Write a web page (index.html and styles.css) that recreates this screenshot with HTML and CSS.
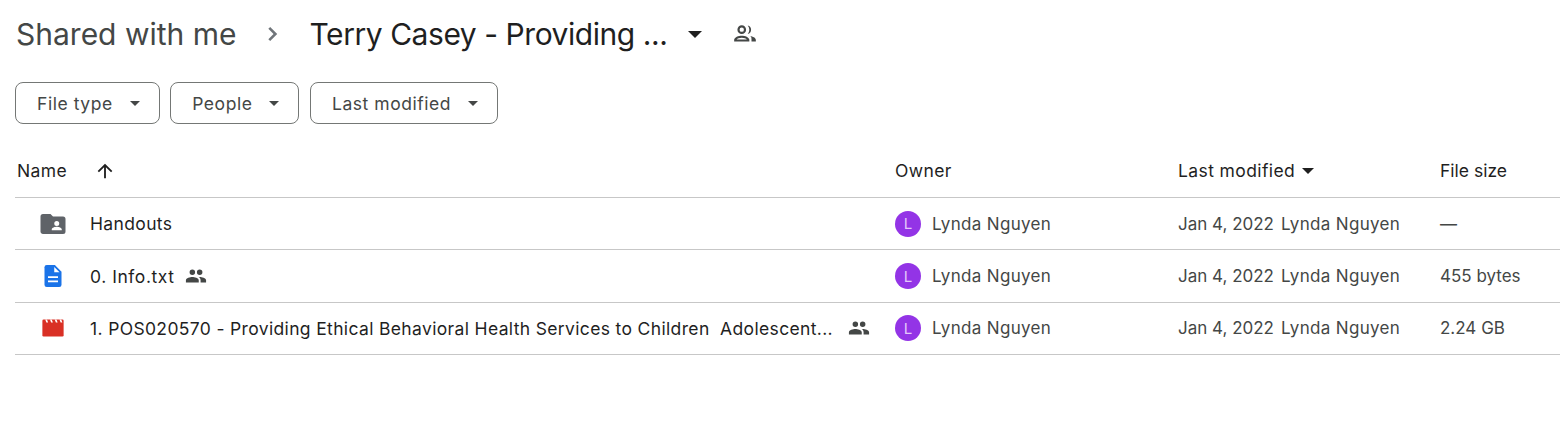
FILE: index.html
```html
<!DOCTYPE html>
<html lang="en">
<head>
  <meta charset="UTF-8">
  <title>Terry Casey - Providing ... - Google Drive</title>
  <link rel="stylesheet" href="styles.css">
</head>
<body>

  <div class="crumbs">
    <span class="crumb-parent">Shared with me</span>
    <svg class="crumb-sep" viewBox="0 0 24 24" width="26" height="26"><path d="M9.400 5.500 7.700 7.200 12.500 12l-4.800 4.800 1.700 1.700 6.500-6.500z"/></svg>
    <span class="crumb-current">Terry Casey - Providing ...</span>
    <span class="caret caret-big"></span>
    <svg class="crumb-people" viewBox="0 0 24 24" width="26" height="26"><path d="M9 12a4 4 0 1 0 0-8 4 4 0 0 0 0 8zm0-6a2 2 0 1 1 0 4 2 2 0 0 1 0-4zm0 7.500c-2.900 0-7 1.400-7 3.900V19h14v-1.600c0-2.500-4.100-3.900-7-3.900zM4.300 17c.6-.8 2.600-1.500 4.700-1.500s4.100.7 4.700 1.500H4.300zM14.500 11.900a4 4 0 0 0 0-7.800 5.900 5.900 0 0 1 0 7.800zm2.200 1.900c1.500.9 1.300 2.500 1.300 3.600V19h4v-1.600c0-1.900-2.800-3.200-5.300-3.600z"/></svg>
  </div>

  <div class="filters">
    <button class="filter">File type <span class="caret"></span></button>
    <button class="filter">People <span class="caret"></span></button>
    <button class="filter">Last modified <span class="caret"></span></button>
  </div>

  <div class="file-list">
    <div class="row head">
      <div class="cell name-head">Name
        <svg class="sort-arrow" viewBox="0 0 24 24" width="22" height="22"><path d="M4 12l1.400 1.400L11 7.800V20h2V7.800l5.600 5.600L20 12l-8-8z"/></svg>
      </div>
      <div class="cell">Owner</div>
      <div class="cell">Last modified <span class="caret caret-sort"></span></div>
      <div class="cell head-size">File size</div>
    </div>

    <div class="row">
      <div class="cell name">
        <svg class="file-icon" viewBox="0 0 24 24" width="30" height="30"><path fill="#5f6368" d="M10 4H4a2 2 0 0 0-2 2v12c0 1.100.9 2 2 2h16a2 2 0 0 0 2-2V8a2 2 0 0 0-2-2h-8z"/><path fill="#fff" d="M15 9.500a2 2 0 1 1 0 4 2 2 0 0 1 0-4zM11 17v-.8c0-1.300 2.700-2 4-2s4 .7 4 2v.8z"/></svg>
        <span class="file-name">Handouts</span>
      </div>
      <div class="cell owner"><span class="avatar">L</span>Lynda Nguyen</div>
      <div class="cell modified"><span>Jan 4, 2022</span><span class="by">Lynda Nguyen</span></div>
      <div class="cell size">—</div>
    </div>

    <div class="row">
      <div class="cell name">
        <svg class="file-icon" viewBox="0 0 24 24" width="30" height="30"><path fill="#1a73e8" d="M13.500 3.200H7A1.800 1.800 0 0 0 5.200 5v14A1.800 1.800 0 0 0 7 20.800h10a1.800 1.800 0 0 0 1.800-1.800V8.500z"/><path fill="#fff" d="M13 4.800 17.200 9H13zM8 12.200h8v1.400H8zM8 15.600h8V17H8z"/></svg>
        <span class="file-name short">0. Info.txt</span>
        <svg class="shared" viewBox="0 0 24 24" width="24" height="24"><path d="M16 11a3 3 0 1 0 0-6 3 3 0 0 0 0 6zm-8 0a3 3 0 1 0 0-6 3 3 0 0 0 0 6zm0 2c-2.300 0-7 1.200-7 3.500V19h14v-2.500C15 14.200 10.300 13 8 13zm8 0c-.3 0-.6 0-1 .1 1.200.8 2 2 2 3.400V19h6v-2.500c0-2.300-4.700-3.500-7-3.500z"/></svg>
      </div>
      <div class="cell owner"><span class="avatar">L</span>Lynda Nguyen</div>
      <div class="cell modified"><span>Jan 4, 2022</span><span class="by">Lynda Nguyen</span></div>
      <div class="cell size">455 bytes</div>
    </div>

    <div class="row">
      <div class="cell name">
        <svg class="file-icon" viewBox="0 0 24 24" width="30" height="30"><path fill="#d93025" d="M4.500 5.200h15a1 1 0 0 1 1 1v11.600a1 1 0 0 1-1 1h-15a1 1 0 0 1-1-1V6.200a1 1 0 0 1 1-1z"/><path fill="#fff" d="M5.800 5.200h1.400l.9 2.300H6.700zM9.600 5.200H11l.9 2.300h-1.400zM13.400 5.200h1.400l.9 2.300h-1.400zM17.200 5.200h1.400l.9 2.300h-1.400z"/></svg>
        <span class="file-name long">1. POS020570 - Providing Ethical Behavioral Health Services to Children&nbsp; Adolescent...</span>
        <svg class="shared" viewBox="0 0 24 24" width="24" height="24"><path d="M16 11a3 3 0 1 0 0-6 3 3 0 0 0 0 6zm-8 0a3 3 0 1 0 0-6 3 3 0 0 0 0 6zm0 2c-2.300 0-7 1.200-7 3.500V19h14v-2.500C15 14.200 10.300 13 8 13zm8 0c-.3 0-.6 0-1 .1 1.200.8 2 2 2 3.400V19h6v-2.500c0-2.300-4.700-3.500-7-3.500z"/></svg>
      </div>
      <div class="cell owner"><span class="avatar">L</span>Lynda Nguyen</div>
      <div class="cell modified"><span>Jan 4, 2022</span><span class="by">Lynda Nguyen</span></div>
      <div class="cell size">2.24 GB</div>
    </div>
  </div>

</body>
</html>
```

FILE: styles.css
```css
body {
  margin: 0;
  padding-left: 15px;
  background-color: #fff;
  color: #1f1f1f;
  font-family: Inter, Roboto, sans-serif;
  font-size: 17px;
  overflow: hidden;
}
.crumbs {
  display: flex;
  align-items: center;
  height: 68px;
  padding-bottom: 2px;
}
.crumb-parent {
  font-size: 30px;
  color: #444746;
  margin-left: 1px;
}
.crumb-sep {
  fill: #70757a;
  margin: 0 24px 0 23px;
}
.crumb-current {
  width: 357px;
  font-size: 30px;
  letter-spacing: -0.45px;
  color: #1f1f1f;
  white-space: nowrap;
}
.crumb-people {
  fill: #444746;
  margin-left: 30px;
}
.caret {
  display: inline-block;
  border-left: 5px solid transparent;
  border-right: 5px solid transparent;
  border-top: 5px solid #444746;
}
.caret-big {
  border-left-width: 7px;
  border-right-width: 7px;
  border-top-width: 7px;
  border-top-color: #1f1f1f;
  margin-left: 21px;
}
.caret-sort {
  border-left-width: 6px;
  border-right-width: 6px;
  border-top-width: 6px;
  border-top-color: #1f1f1f;
  margin-left: 7px;
}
.filters {
  display: flex;
  gap: 10.500px;
  margin-top: 12px;
}
.filter {
  display: flex;
  align-items: center;
  gap: 17px;
  height: 42px;
  padding: 0 19px 0 21px;
  background: #fff;
  border: 1px solid #747775;
  border-radius: 8px;
  color: #444746;
  font-family: inherit;
  font-size: 17.500px;
  letter-spacing: 0.55px;
}
.file-list {
  margin-top: 25px;
}
.row {
  display: grid;
  grid-template-columns: 880px 283px 262px 1fr;
  align-items: center;
  height: 51.400px;
  border-bottom: 1px solid #c7c7c7;
  color: #444746;
}
.head {
  height: 49px;
  padding-bottom: 5px;
  box-sizing: border-box;
  color: #1f1f1f;
  font-size: 17.500px;
  letter-spacing: 0.4px;
}
.head-size {
  letter-spacing: 0;
}
.cell {
  display: flex;
  align-items: center;
  min-width: 0;
  white-space: nowrap;
}
.name-head {
  padding-left: 2px;
}
.sort-arrow {
  fill: #1f1f1f;
  margin-left: 27px;
}
.name {
  color: #1f1f1f;
  padding-left: 23px;
  font-size: 17.500px;
  letter-spacing: 0.35px;
}
.file-icon {
  flex: none;
}
.file-name {
  margin-left: 22px;
}
.short {
  letter-spacing: 0.55px;
}
.long {
  width: 742px;
}
.shared {
  flex: none;
  fill: #444746;
  width: 22px;
  height: 22px;
  margin-left: 10px;
}
.long + .shared {
  margin-left: 16px;
}
.owner {
  gap: 11px;
  letter-spacing: 0.33px;
}
.avatar {
  display: flex;
  align-items: center;
  justify-content: center;
  width: 26px;
  height: 26px;
  border-radius: 50%;
  background-color: #9334e6;
  color: #e3c8fa;
  font-size: 15px;
  letter-spacing: 0;
}
.modified {
  gap: 7px;
}
.by {
  letter-spacing: 0.33px;
}
```
